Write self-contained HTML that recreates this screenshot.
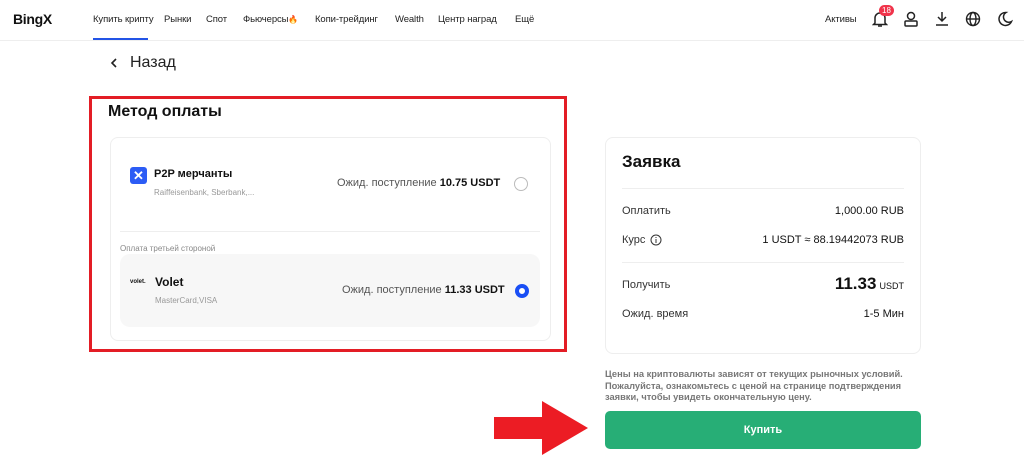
<!DOCTYPE html>
<html><head><meta charset="utf-8"><style>
*{margin:0;padding:0;box-sizing:border-box}
body{width:1024px;height:470px;background:#fff;font-family:"Liberation Sans",sans-serif;color:#111;position:relative;overflow:hidden}
.a{position:absolute;white-space:nowrap}
.nav{position:absolute;left:0;top:0;width:1024px;height:41px;border-bottom:1px solid #eee}
.ni{position:absolute;top:14px;font-size:9.5px;color:#222;letter-spacing:-0.1px}
.lbl{font-size:11px;color:#333}
.val{font-size:11px;color:#111;text-align:right;right:120px}
</style></head><body>
<div class="nav">
<div class="a" style="left:13px;top:11px;font-size:14px;font-weight:bold;letter-spacing:-0.3px">BingX</div>
<div class="ni" style="left:93px">Купить крипту</div>
<div class="a" style="left:93px;top:38px;width:55px;height:2px;background:#2354e6"></div>
<div class="ni" style="left:164px">Рынки</div>
<div class="ni" style="left:206px">Спот</div>
<div class="ni" style="left:243px">Фьючерсы<span style="color:#f5631e;font-size:8px">🔥</span></div>
<div class="ni" style="left:315px">Копи-трейдинг</div>
<div class="ni" style="left:395px">Wealth</div>
<div class="ni" style="left:438px">Центр наград</div>
<div class="ni" style="left:515px">Ещё</div>
<div class="ni" style="left:825px">Активы</div>
<svg class="a" style="left:872px;top:10px" width="16" height="18" viewBox="0 0 16 18" fill="none" stroke="#222" stroke-width="1.5"><path d="M3 13V8a5 5 0 0 1 10 0v5l1.5 1.5h-13z"/><path d="M6 16h4"/></svg>
<div class="a" style="left:879px;top:5px;background:#f0334a;color:#fff;font-size:8px;border-radius:7px;padding:1px 3px;line-height:9px">18</div>
<svg class="a" style="left:904px;top:11px" width="14" height="16" viewBox="0 0 14 16" fill="none" stroke="#222" stroke-width="1.5"><circle cx="7" cy="5" r="3.5"/><rect x="1" y="10" width="12" height="5" rx="1"/></svg>
<svg class="a" style="left:935px;top:11px" width="14" height="16" viewBox="0 0 14 16" fill="none" stroke="#222" stroke-width="1.5"><path d="M7 1v9M3 6l4 4 4-4M1 14h12"/></svg>
<svg class="a" style="left:965px;top:11px" width="16" height="16" viewBox="0 0 16 16" fill="none" stroke="#222" stroke-width="1.4"><circle cx="8" cy="8" r="6.5"/><ellipse cx="8" cy="8" rx="3" ry="6.5"/><path d="M1.5 8h13"/></svg>
<svg class="a" style="left:997px;top:11px" width="16" height="16" viewBox="0 0 16 16" fill="none" stroke="#222" stroke-width="1.5"><path d="M9 1.5a6.5 6.5 0 1 0 5.5 9 5 5 0 0 1-5.5-9z"/></svg>
</div>
<svg class="a" style="left:110px;top:57px" width="8" height="12" viewBox="0 0 8 12" fill="none" stroke="#222" stroke-width="1.6"><path d="M6 2L2 6l4 4"/></svg>
<div class="a" style="left:130px;top:54px;font-size:16px;color:#222">Назад</div>

<div class="a" style="left:89px;top:96px;width:478px;height:256px;border:3px solid #e31d25"></div>
<div class="a" style="left:108px;top:103px;font-size:16px;font-weight:bold">Метод оплаты</div>
<div class="a" style="left:110px;top:137px;width:441px;height:204px;border:1px solid #eee;border-radius:8px"></div>
<div class="a" style="left:130px;top:167px;width:17px;height:17px;background:#2c5cf5;border-radius:3px;color:#fff;font-size:13px;font-weight:bold;text-align:center;line-height:17px">✕</div>
<div class="a" style="left:154px;top:168px;font-size:11px;font-weight:bold">P2P мерчанты</div>
<div class="a" style="left:154px;top:188px;font-size:8px;color:#999">Raiffeisenbank, Sberbank,...</div>
<div class="a" style="left:337px;top:177px;font-size:11px;color:#555">Ожид. поступление <b style="color:#111">10.75 USDT</b></div>
<div class="a" style="left:514px;top:177px;width:14px;height:14px;border:1px solid #bbb;border-radius:50%"></div>
<div class="a" style="left:120px;top:231px;width:420px;height:1px;background:#eee"></div>
<div class="a" style="left:120px;top:244px;font-size:8px;color:#888">Оплата третьей стороной</div>
<div class="a" style="left:120px;top:254px;width:420px;height:73px;background:#f7f7f7;border-radius:10px"></div>
<div class="a" style="left:130px;top:279px;font-size:6px;font-weight:bold">volet.</div>
<div class="a" style="left:155px;top:275px;font-size:12px;font-weight:bold">Volet</div>
<div class="a" style="left:155px;top:296px;font-size:8px;color:#999">MasterCard,VISA</div>
<div class="a" style="left:342px;top:284px;font-size:11px;color:#555">Ожид. поступление <b style="color:#111">11.33 USDT</b></div>
<div class="a" style="left:515px;top:284px;width:14px;height:14px;border:4px solid #1a4ff5;border-radius:50%;background:#fff"></div>

<div class="a" style="left:605px;top:137px;width:316px;height:217px;border:1px solid #eee;border-radius:8px"></div>
<div class="a" style="left:622px;top:152px;font-size:17px;font-weight:bold">Заявка</div>
<div class="a" style="left:622px;top:188px;width:282px;height:1px;background:#eee"></div>
<div class="a lbl" style="left:622px;top:205px">Оплатить</div>
<div class="a val" style="top:205px">1,000.00 RUB</div>
<div class="a lbl" style="left:622px;top:234px">Курс</div>
<svg class="a" style="left:650px;top:234px" width="12" height="12" viewBox="0 0 12 12" fill="none" stroke="#333" stroke-width="1"><circle cx="6" cy="6" r="5"/><path d="M6 5v4M6 3v1"/></svg>
<div class="a val" style="top:234px">1 USDT ≈ 88.19442073 RUB</div>
<div class="a" style="left:622px;top:262px;width:282px;height:1px;background:#eee"></div>
<div class="a lbl" style="left:622px;top:279px">Получить</div>
<div class="a val" style="top:274px"><b style="font-size:17px">11.33</b> <span style="font-size:9px">USDT</span></div>
<div class="a lbl" style="left:622px;top:308px">Ожид. время</div>
<div class="a val" style="top:308px">1-5 Мин</div>

<div class="a" style="left:605px;top:369px;font-size:9.3px;font-weight:bold;color:#777;line-height:11.5px;white-space:normal;width:320px">Цены на криптовалюты зависят от текущих рыночных условий. Пожалуйста, ознакомьтесь с ценой на странице подтверждения заявки, чтобы увидеть окончательную цену.</div>
<div class="a" style="left:605px;top:411px;width:316px;height:38px;background:#27ae76;border-radius:5px;color:#fff;font-size:11px;font-weight:bold;text-align:center;line-height:38px">Купить</div>
<svg class="a" style="left:494px;top:401px" width="96" height="54" viewBox="0 0 96 54"><path d="M0 16h48V0l46 27-46 27V38H0z" fill="#ec1c24"/></svg>
</body></html>
